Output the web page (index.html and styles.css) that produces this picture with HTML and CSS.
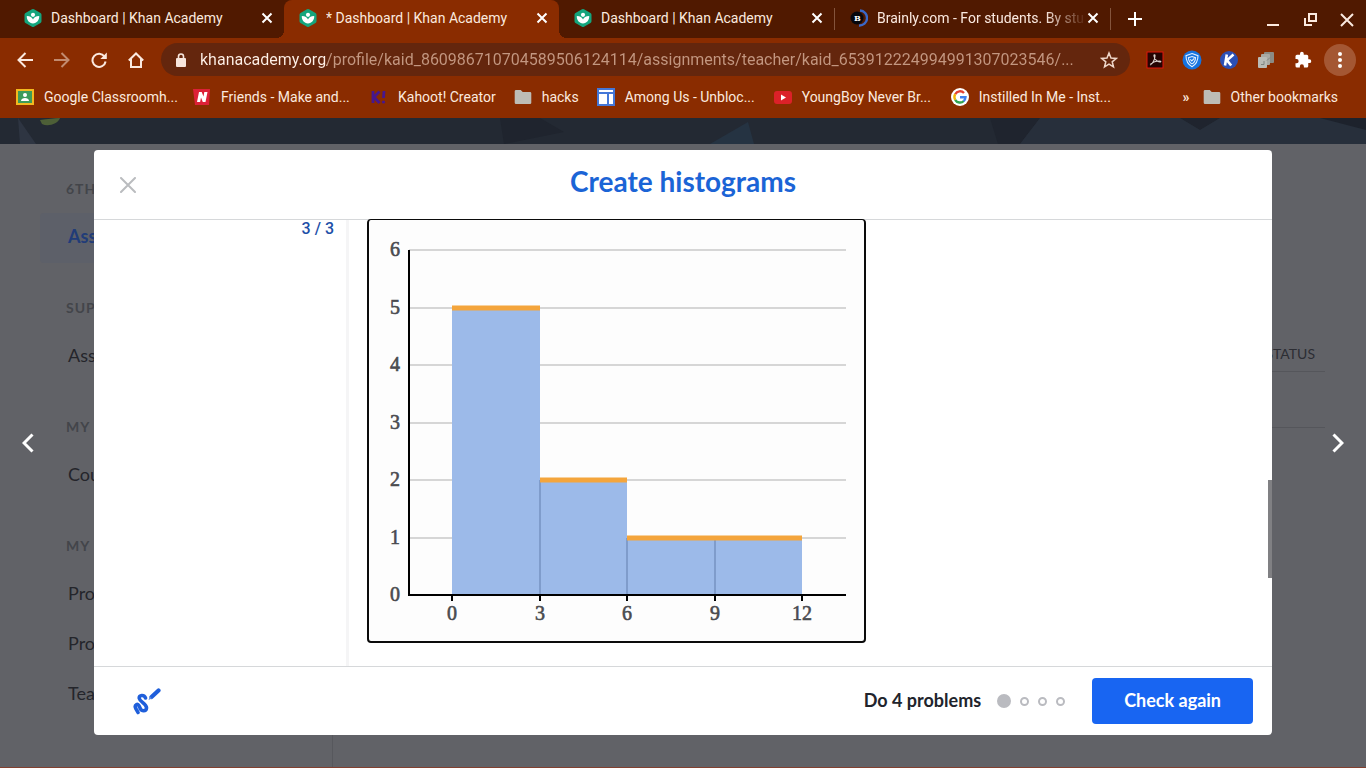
FILE: index.html
```html
<!DOCTYPE html>
<html lang="en">
<head>
  <meta charset="UTF-8" />
  <meta name="viewport" content="width=device-width, initial-scale=1.0" />
  <title>Dashboard | Khan Academy</title>
  <link rel="stylesheet" href="styles.css">
</head>
<body>
  <!-- shared icons -->
  <svg class="defs" width="0" height="0" aria-hidden="true">
    <symbol id="khan" viewBox="0 0 18 18">
      <path fill="#14a57c" d="M8 .3a2 2 0 0 1 2 0l6.500 3.700a2 2 0 0 1 1 1.700v6.600a2 2 0 0 1-1 1.700L10 17.700a2 2 0 0 1-2 0L1.500 14a2 2 0 0 1-1-1.700V5.700a2 2 0 0 1 1-1.700z"/>
      <circle cx="9" cy="5.800" r="2.100" fill="#fff"/>
      <path fill="#fff" d="M2.800 7c3.400 0 5.600 1.600 6.200 3.600C9.600 8.600 11.800 7 15.200 7c.3 4-2.400 7.400-6.200 7.400S2.500 11 2.800 7z"/>
    </symbol>
    <symbol id="cross" viewBox="0 0 12 12">
      <path d="M1.500 1.500l9 9M10.500 1.500l-9 9" fill="none" stroke="currentColor" stroke-width="2"/>
    </symbol>
    <symbol id="folder" viewBox="0 0 18 16">
      <path fill="#bdbdb6" d="M1.500 1h5.300l1.900 2H16a1.300 1.300 0 0 1 1.300 1.300v9.400A1.300 1.300 0 0 1 16 15H2a1.300 1.300 0 0 1-1.300-1.300V2z"/>
    </symbol>
  </svg>

  <header class="browser">
    <div class="tabs">
      <div class="tab">
        <svg class="fav"><use href="#khan"/></svg>
        <span class="tab-title">Dashboard | Khan Academy</span>
        <button class="tab-close" aria-label="Close tab"><svg><use href="#cross"/></svg></button>
      </div>
      <div class="tab active">
        <svg class="fav"><use href="#khan"/></svg>
        <span class="tab-title">* Dashboard | Khan Academy</span>
        <button class="tab-close" aria-label="Close tab"><svg><use href="#cross"/></svg></button>
      </div>
      <div class="tab">
        <svg class="fav"><use href="#khan"/></svg>
        <span class="tab-title">Dashboard | Khan Academy</span>
        <button class="tab-close" aria-label="Close tab"><svg><use href="#cross"/></svg></button>
      </div>
      <span class="tab-sep"></span>
      <div class="tab">
        <svg class="fav" viewBox="0 0 18 18">
          <path d="M10 1.500a7.500 7.500 0 0 1-1 15" fill="none" stroke="#3a68c8" stroke-width="2.400"/>
          <circle cx="7" cy="9" r="6.500" fill="#06070d"/>
          <text x="4" y="12" class="fav-b">B</text>
        </svg>
        <span class="tab-title fade">Brainly.com - For students. By stu</span>
        <button class="tab-close" aria-label="Close tab"><svg><use href="#cross"/></svg></button>
      </div>
      <span class="tab-sep"></span>
      <button class="new-tab" aria-label="New tab">
        <svg width="14" height="14"><path d="M7 0v14M0 7h14" stroke="currentColor" stroke-width="2"/></svg>
      </button>
      <div class="window-controls">
        <button aria-label="Minimize"><svg width="14" height="14"><path d="M1 12h12" stroke="currentColor" stroke-width="2"/></svg></button>
        <button aria-label="Restore"><svg width="14" height="14" fill="none" stroke="currentColor" stroke-width="2"><path d="M6 1h7v7H6zM2 5v7h7"/></svg></button>
        <button aria-label="Close"><svg width="14" height="14"><path d="M1 1l12 12M13 1L1 13" stroke="currentColor" stroke-width="2"/></svg></button>
      </div>
    </div>

    <div class="toolbar">
      <button class="tool" aria-label="Back">
        <svg width="16" height="16" fill="none" stroke="currentColor" stroke-width="2"><path d="M16 8H2M8.500 1L1.500 8l7 7"/></svg>
      </button>
      <button class="tool dim" aria-label="Forward">
        <svg width="16" height="16" fill="none" stroke="currentColor" stroke-width="2"><path d="M0 8h14M7.500 1l7 7-7 7"/></svg>
      </button>
      <button class="tool" aria-label="Reload">
        <svg width="16" height="16"><path d="M13.500 4.500A6.600 6.600 0 1 0 14.600 9.500" fill="none" stroke="currentColor" stroke-width="2"/><path d="M15.800.500v6.500H9.300z" fill="currentColor"/></svg>
      </button>
      <button class="tool" aria-label="Home">
        <svg width="16" height="16" fill="none" stroke="currentColor" stroke-width="2"><path d="M.8 8.500L8 1.500l7.200 7M3 7v8h10V7"/></svg>
      </button>
      <div class="omnibox">
        <svg width="12" height="16"><rect x="1" y="6" width="10" height="9" rx="1" fill="#f6e5dc"/><path d="M3.500 7V4.500a2.500 2.500 0 0 1 5 0V7" fill="none" stroke="#f6e5dc" stroke-width="1.600"/></svg>
        <input class="url" type="text" aria-label="Address" value="khanacademy.org/profile/kaid_860986710704589506124114/assignments/teacher/kaid_653912224994991307023546/...">
        <button class="star" aria-label="Bookmark this tab">
          <svg width="18" height="18"><path d="M9 2l2 5 5.300.400-4.100 3.400 1.300 5.200L9 13.200 4.500 16l1.300-5.200L1.700 7.400 7 7z" fill="none" stroke="currentColor" stroke-width="1.500"/></svg>
        </button>
      </div>
      <button class="tool" aria-label="PDF tools">
        <svg width="18" height="18"><rect x="1" y="1" width="16" height="16" fill="#250403" stroke="#e0140c"/><path d="M4 14c2-.5 5-5 5-9.500 0-1-1.300-1-1 .5C8.500 8 11 11 14 11c1.200 0 1-1-.5-1-3 0-7 1.500-9 3.300" fill="none" stroke="#d9cfcb" stroke-width="1.200"/></svg>
      </button>
      <button class="tool" aria-label="Shield">
        <svg width="20" height="20"><circle cx="10" cy="10" r="9.500" fill="#1673e0"/><path d="M10 3.500l6 2.200c0 5-1.800 8.600-6 11-4.200-2.400-6-6-6-11zM10 6.500l3.500 1.200c0 3-1.200 4.800-3.500 6.200-2.300-1.400-3.500-3.200-3.500-6.200zM8.300 9.300l1.500 1.600 2.500-2.500" fill="none" stroke="#e4f0ff" stroke-width="1.100"/></svg>
      </button>
      <button class="tool" aria-label="Kami">
        <svg width="18" height="18"><circle cx="9" cy="9" r="9" fill="#2b4fb4"/><path d="M6.800 3.500L5 14.500M13.500 3.500L7 9.300l4.200 5.200" fill="none" stroke="#fff" stroke-width="2.600"/></svg>
      </button>
      <button class="tool" aria-label="Clipboard">
        <svg width="18" height="18"><rect x="7" y="1" width="10" height="11" rx="1" fill="#8b8b84"/><rect x="4" y="3" width="9" height="11" rx="1" fill="#a8a9a3"/><rect x="1" y="6" width="9" height="11" rx="1" fill="#b9bbb6"/><path d="M4 13.500h3V10M10 9.500l3-3" fill="none" stroke="#7e8580"/></svg>
      </button>
      <button class="tool" aria-label="Extensions">
        <svg width="18" height="18" viewBox="0 0 24 24"><path fill="#fff" d="M20.500 11H19V7a2 2 0 0 0-2-2h-4V3.500a2.500 2.500 0 0 0-5 0V5H4a2 2 0 0 0-2 2v3.800h1.500a2.700 2.700 0 0 1 0 5.400H2V20a2 2 0 0 0 2 2h3.800v-1.500a2.700 2.700 0 0 1 5.400 0V22H17a2 2 0 0 0 2-2v-4h1.500a2.500 2.500 0 0 0 0-5z"/></svg>
      </button>
      <button class="tool menu" aria-label="Menu">
        <svg width="4" height="16" fill="#fff"><circle cx="2" cy="2" r="2"/><circle cx="2" cy="8" r="2"/><circle cx="2" cy="14" r="2"/></svg>
      </button>
    </div>

    <nav class="bookmarks">
      <a href="#">
        <svg viewBox="0 0 18 18"><rect y="1" width="18" height="16" fill="#f2b91f"/><rect x="2" y="3" width="14" height="12" fill="#3d9b5a"/><circle cx="9" cy="7" r="2" fill="#fff"/><path d="M5 13c0-4 8-4 8 0z" fill="#fff"/></svg>
        <span class="cut">Google Classroomh...</span>
      </a>
      <a href="#">
        <svg viewBox="0 0 18 18"><path d="M0 1h17l-1 16H2z" fill="#dd2137"/><path d="M4 14L6 4h2.700l1.800 4.500L11.300 4H14.500l-2 10H9.800L8 9.500 7.100 14z" fill="#fff"/></svg>
        <span class="cut">Friends - Make and...</span>
      </a>
      <a href="#">
        <svg viewBox="0 0 18 18"><path d="M3 3v12M9.500 3.500L4 9l5.500 6M14 3l-.5 7" fill="none" stroke="#46178f" stroke-width="2.800"/><circle cx="13.500" cy="14" r="1.600" fill="#46178f"/></svg>
        <span>Kahoot! Creator</span>
      </a>
      <a href="#">
        <svg><use href="#folder"/></svg>
        <span>hacks</span>
      </a>
      <a href="#">
        <svg viewBox="0 0 18 18"><rect width="18" height="18" fill="#4477d8"/><path d="M2 2h14v2H2zM2 6h8v10H2zM12 6h4v10h-4z" fill="#fff"/></svg>
        <span class="cut">Among Us - Unbloc...</span>
      </a>
      <a href="#">
        <svg viewBox="0 0 18 18"><rect y="3" width="18" height="13" rx="3" fill="#db2128"/><path d="M7 6.500l5 3-5 3z" fill="#fff"/></svg>
        <span class="cut">YoungBoy Never Br...</span>
      </a>
      <a href="#">
        <svg viewBox="0 0 18 18"><circle cx="9" cy="9" r="9" fill="#fff"/><g fill="none" stroke-width="2.400"><path d="M4.200 6.200A5.500 5.500 0 0 1 13 5" stroke="#e34133"/><path d="M4.200 11.800a5.500 5.500 0 0 1 0-5.600" stroke="#f3b605"/><path d="M12.800 13a5.500 5.500 0 0 1-8.600-1.200" stroke="#32a350"/><path d="M9 9.300h5.500a5.500 5.500 0 0 1-1.900 3.900" stroke="#4080ee"/></g></svg>
        <span class="cut">Instilled In Me - Inst...</span>
      </a>
      <button class="more" aria-label="More bookmarks">»</button>
      <a href="#" class="other">
        <svg><use href="#folder"/></svg>
        <span>Other bookmarks</span>
      </a>
    </nav>
  </header>

  <main class="page">
    <svg class="banner" viewBox="0 0 1366 26" preserveAspectRatio="none">
      <rect width="1366" height="26" fill="#232933"/>
      <path fill="#2e3542" d="M18 0l18 26H20z"/>
      <path fill="#1f242e" d="M500 0h40l24 14-60 12zM990 0h50l-20 26h-22zM1180 0h40l-20 12z"/>
      <path fill="#253342" d="M710 26l38-22 6 22z"/>
      <path fill="#272f3b" d="M1040 0h140l20 12 20-12h66v26h-266z"/>
      <path fill="#272f3b" d="M1286 0h80v26h-80z"/>
      <path fill="#1d222c" d="M1320 0h46v12z"/>
      <path fill="#4d5f37" d="M40 2c8-1 14-2 20-2-2 6-12 9-18 6z"/>
    </svg>

    <div class="dashboard">
      <nav class="sidebar">
        <h4>6TH</h4>
        <a href="#" class="selected">Ass</a>
        <h4>SUP</h4>
        <a href="#">Ass</a>
        <h4>MY</h4>
        <a href="#">Cou</a>
        <h4>MY</h4>
        <a href="#">Pro</a>
        <a href="#">Pro</a>
        <a href="#">Tea</a>
      </nav>
      <section class="assignments">
        <div class="table-head">STATUS</div>
        <div class="table-row"></div>
      </section>
    </div>

    <div class="overlay">
      <button class="nav-arrow" aria-label="Previous">
        <svg width="12" height="20"><path d="M10.500 1.500L2 10l8.500 8.500" fill="none" stroke="#fff" stroke-width="3"/></svg>
      </button>

      <div class="modal" role="dialog" aria-labelledby="title">
        <div class="modal-head">
          <button class="modal-close" aria-label="Close">
            <svg width="16" height="16"><path d="M1 1l14 14M15 1L1 15" stroke="#babcbf" stroke-width="2" stroke-linecap="round"/></svg>
          </button>
          <h1 id="title">Create histograms</h1>
        </div>

        <div class="modal-body">
          <div class="steps">3 / 3</div>
          <div class="exercise">
            <svg class="chart" width="495" height="421" viewBox="0 0 495 421" role="img" aria-label="Histogram">
              <g stroke="#d6d6d6" stroke-width="2">
                <path d="M40 30H477M40 88H477M40 145H477M40 203H477M40 260H477M40 318H477"/>
              </g>
              <g fill="#9cbae9">
                <rect x="83" y="88" width="88" height="287"/>
                <rect x="171" y="260" width="87" height="115"/>
                <rect x="258" y="318" width="88" height="57"/>
                <rect x="346" y="318" width="87" height="57"/>
              </g>
              <path d="M171 260V375M258 318V375M346 318V375" stroke="#7f9ccb" stroke-width="2"/>
              <path d="M83 88h88M171 260h87M258 318h175" stroke="#f4a53c" stroke-width="5"/>
              <path d="M40 30V375H477M83 375v6M171 375v6M258 375v6M346 375v6M433 375v6" fill="none" stroke="#000" stroke-width="2"/>
              <g class="tick" text-anchor="end">
                <text x="31" y="36">6</text>
                <text x="31" y="94">5</text>
                <text x="31" y="151">4</text>
                <text x="31" y="209">3</text>
                <text x="31" y="266">2</text>
                <text x="31" y="324">1</text>
                <text x="31" y="381">0</text>
              </g>
              <g class="tick" text-anchor="middle">
                <text x="83" y="400">0</text>
                <text x="171" y="400">3</text>
                <text x="258" y="400">6</text>
                <text x="346" y="400">9</text>
                <text x="433" y="400">12</text>
              </g>
            </svg>
          </div>
          <div class="scroll-thumb"></div>
        </div>

        <div class="modal-foot">
          <button class="scratchpad" aria-label="Scratchpad">
            <svg width="28" height="28" fill="none" stroke="#1f5fdb" stroke-linecap="round"><path d="M12.500 11c-1-3.500-7-3.500-6.200.5C7 15 14 17 13.500 21c-.5 4-5 3-6 1s-2-5.500-4-4.500c-3 1.500 0 5 1.500 8" stroke-width="3.600"/><path d="M18.500 10L25.500 3.500" stroke-width="4.200"/><path d="M15.500 13l1.500-3.500 2 2z" fill="#5b87dd" stroke="none"/></svg>
          </button>
          <span class="goal">Do 4 problems</span>
          <div class="dots">
            <i class="dot done"></i><i class="dot"></i><i class="dot"></i><i class="dot"></i>
          </div>
          <button class="check">Check again</button>
        </div>
      </div>

      <button class="nav-arrow next" aria-label="Next">
        <svg width="12" height="20"><path d="M1.500 1.500L10 10l-8.500 8.500" fill="none" stroke="#fff" stroke-width="3"/></svg>
      </button>
    </div>
  </main>
</body>
</html>
```

FILE: styles.css
```css
* { box-sizing: border-box; margin: 0; padding: 0; }

body {
  display: flex;
  flex-direction: column;
  height: 100vh;
  overflow: hidden;
  font-family: Lato, "Noto Sans", sans-serif;
  background: #616267;
}

button {
  border: 0;
  background: none;
  color: inherit;
  font: inherit;
  display: flex;
  align-items: center;
  justify-content: center;
}

a { text-decoration: none; color: inherit; }

.defs { position: absolute; }

/* Browser bar */
.browser {
  font-family: Roboto, sans-serif;
  font-size: 14px;
  color: #fbe9df;
  background: #8a2c00;
}

.tabs {
  display: flex;
  align-items: center;
  height: 38px;
  padding: 0 12px 0 9px;
  background: #501900;
}

.tab {
  position: relative;
  display: flex;
  align-items: center;
  flex: 0 1 275px;
  min-width: 0;
  height: 38px;
  padding: 0 11px 2px 15px;
}

.tab.active {
  background: #8a2c00;
  border-radius: 8px 8px 0 0;
}

.tab.active::before,
.tab.active::after {
  content: "";
  position: absolute;
  bottom: 0;
  width: 8px;
  height: 8px;
}

.tab.active::before {
  left: -8px;
  background: radial-gradient(circle at 0 0, transparent 8px, #8a2c00 8px);
}

.tab.active::after {
  right: -8px;
  background: radial-gradient(circle at 100% 0, transparent 8px, #8a2c00 8px);
}

.fav { width: 18px; height: 18px; flex: none; }
.fav-b { font: bold 8px "DejaVu Serif", serif; fill: #fff; }

.tab-title {
  flex: 1;
  margin: 0 0 0 9px;
  overflow: hidden;
  white-space: nowrap;
}

.tab-title.fade {
  -webkit-mask-image: linear-gradient(to right, #000 80%, transparent);
  mask-image: linear-gradient(to right, #000 80%, transparent);
}

.tab-close { color: #fff; }
.tab-close svg { width: 12px; height: 12px; }

.tab-sep {
  width: 1px;
  height: 22px;
  background: #84543c;
}

.new-tab { margin-left: 17px; color: #fff; }

.window-controls {
  display: flex;
  gap: 23px;
  margin-left: auto;
  padding-top: 2px;
}

.toolbar {
  display: flex;
  align-items: center;
  height: 43px;
  padding: 0 8px 0 6px;
}

.tool { width: 37px; height: 33px; }
.tool.dim { opacity: .5; }

.omnibox {
  flex: 1;
  display: flex;
  align-items: center;
  height: 33px;
  margin: 0 6px 0 7px;
  padding: 0 12px 0 14px;
  border-radius: 17px;
  background: #64260d;
}

.url {
  flex: 1;
  min-width: 0;
  margin: 0 12px 0 13px;
  border: 0;
  outline: 0;
  font: 16px Roboto, sans-serif;
  color: transparent;
  /* the domain is brighter than the rest of the address */
  background: linear-gradient(to right, #fff1e8 127px, #c39781 127px);
  -webkit-background-clip: text;
  background-clip: text;
}

.star { color: #eed6c9; }

.menu::before {
  content: "";
  width: 32px;
  height: 32px;
  margin-right: -18px;
  border-radius: 50%;
  background: #a45733;
}

.menu svg { position: relative; margin-right: 14px; }

.bookmarks {
  display: flex;
  align-items: center;
  gap: 18px;
  height: 37px;
  padding: 0 28px 5px 16px;
  white-space: nowrap;
}

.bookmarks a {
  display: flex;
  align-items: center;
  gap: 10px;
}

.bookmarks svg { width: 18px; height: 18px; flex: none; }
.bookmarks .cut { width: 131px; }
.bookmarks .more { margin-left: auto; margin-right: -5px; font-weight: bold; }

/* Page under the overlay */
.page {
  position: relative;
  flex: 1;
  display: flex;
  flex-direction: column;
  border-bottom: 1px solid #83402f;
}

.banner { display: block; width: 100%; height: 26px; }

.dashboard { flex: 1; display: flex; }

.sidebar {
  width: 333px;
  margin-top: 10px;
  padding: 10px 0 0 40px;
  border-right: 1px solid #57585d;
}

.sidebar h4 {
  height: 49px;
  padding-left: 26px;
  font-size: 14px;
  line-height: 49px;
  letter-spacing: 1px;
  color: #43454a;
}

.sidebar a {
  display: block;
  height: 50px;
  padding-left: 28px;
  font-size: 18px;
  line-height: 47px;
  color: #24252b;
}

.sidebar a + h4 { margin-top: 20px; }

.sidebar .selected {
  color: #213c78;
  font-weight: bold;
  background: #5d6069;
  border-radius: 4px;
}

.assignments { flex: 1; padding: 191px 41px 0 40px; }

.table-head {
  height: 37px;
  padding-right: 10px;
  text-align: right;
  font-size: 14px;
  line-height: 38px;
  color: #2c2d33;
  border-bottom: 1px solid #55565b;
}

.table-row { height: 56px; border-bottom: 1px solid #55565b; }

/* Exercise dialog */
.overlay {
  position: absolute;
  inset: 0;
  display: flex;
  padding: 32px 0;
}

.nav-arrow {
  flex: 0 0 94px;
  justify-content: flex-start;
  padding-left: 22px;
}

.nav-arrow.next {
  justify-content: flex-end;
  padding: 0 22px 0 0;
}

.modal {
  flex: 1;
  display: flex;
  flex-direction: column;
  background: #fff;
  border-radius: 4px;
}

.modal-head {
  display: grid;
  grid-template-columns: 1fr auto 1fr;
  align-items: center;
  height: 70px;
  padding: 0 26px;
  border-bottom: 1px solid #d6d8da;
}

.modal-close { justify-self: start; }

h1 {
  padding-bottom: 8px;
  font-size: 28px;
  line-height: 34px;
  color: #1b64d6;
}

.modal-body {
  position: relative;
  flex: 1;
  display: flex;
  min-height: 0;
}

.steps {
  width: 255px;
  padding-right: 12px;
  border-right: 3px solid #f5f5f6;
  text-align: right;
  font: 500 16px/18px Roboto, sans-serif;
  color: #1d4fa8;
}

.exercise { padding-left: 18px; }

.chart {
  display: block;
  box-sizing: content-box;
  margin-top: -1px;
  border: 2px solid #0b0b0b;
  border-top-width: 1px;
  border-radius: 4px;
  background: #fdfdfd;
}

.tick {
  font: 20px "Liberation Serif", serif;
  fill: #4a4b4f;
  stroke: #4a4b4f;
  stroke-width: .6px;
}

.scroll-thumb {
  position: absolute;
  right: 0;
  top: 260px;
  width: 4px;
  height: 98px;
  background: #808083;
}

.modal-foot {
  display: flex;
  align-items: center;
  height: 69px;
  padding: 0 19px 0 39px;
  border-top: 1px solid #d6d8da;
  font-size: 18px;
  font-weight: bold;
  color: #21242c;
}

.goal { margin-left: auto; padding-bottom: 3px; }

.dots {
  display: flex;
  align-items: center;
  gap: 9px;
  margin: 0 27px 0 16px;
}

.dot {
  width: 9px;
  height: 9px;
  border: 2px solid #babbc0;
  border-radius: 50%;
}

.dot.done {
  width: 14px;
  height: 14px;
  background: #babbc0;
}

.check {
  height: 46px;
  padding: 0 32px 3px;
  border-radius: 4px;
  background: #1865f2;
  color: #fff;
}
```
